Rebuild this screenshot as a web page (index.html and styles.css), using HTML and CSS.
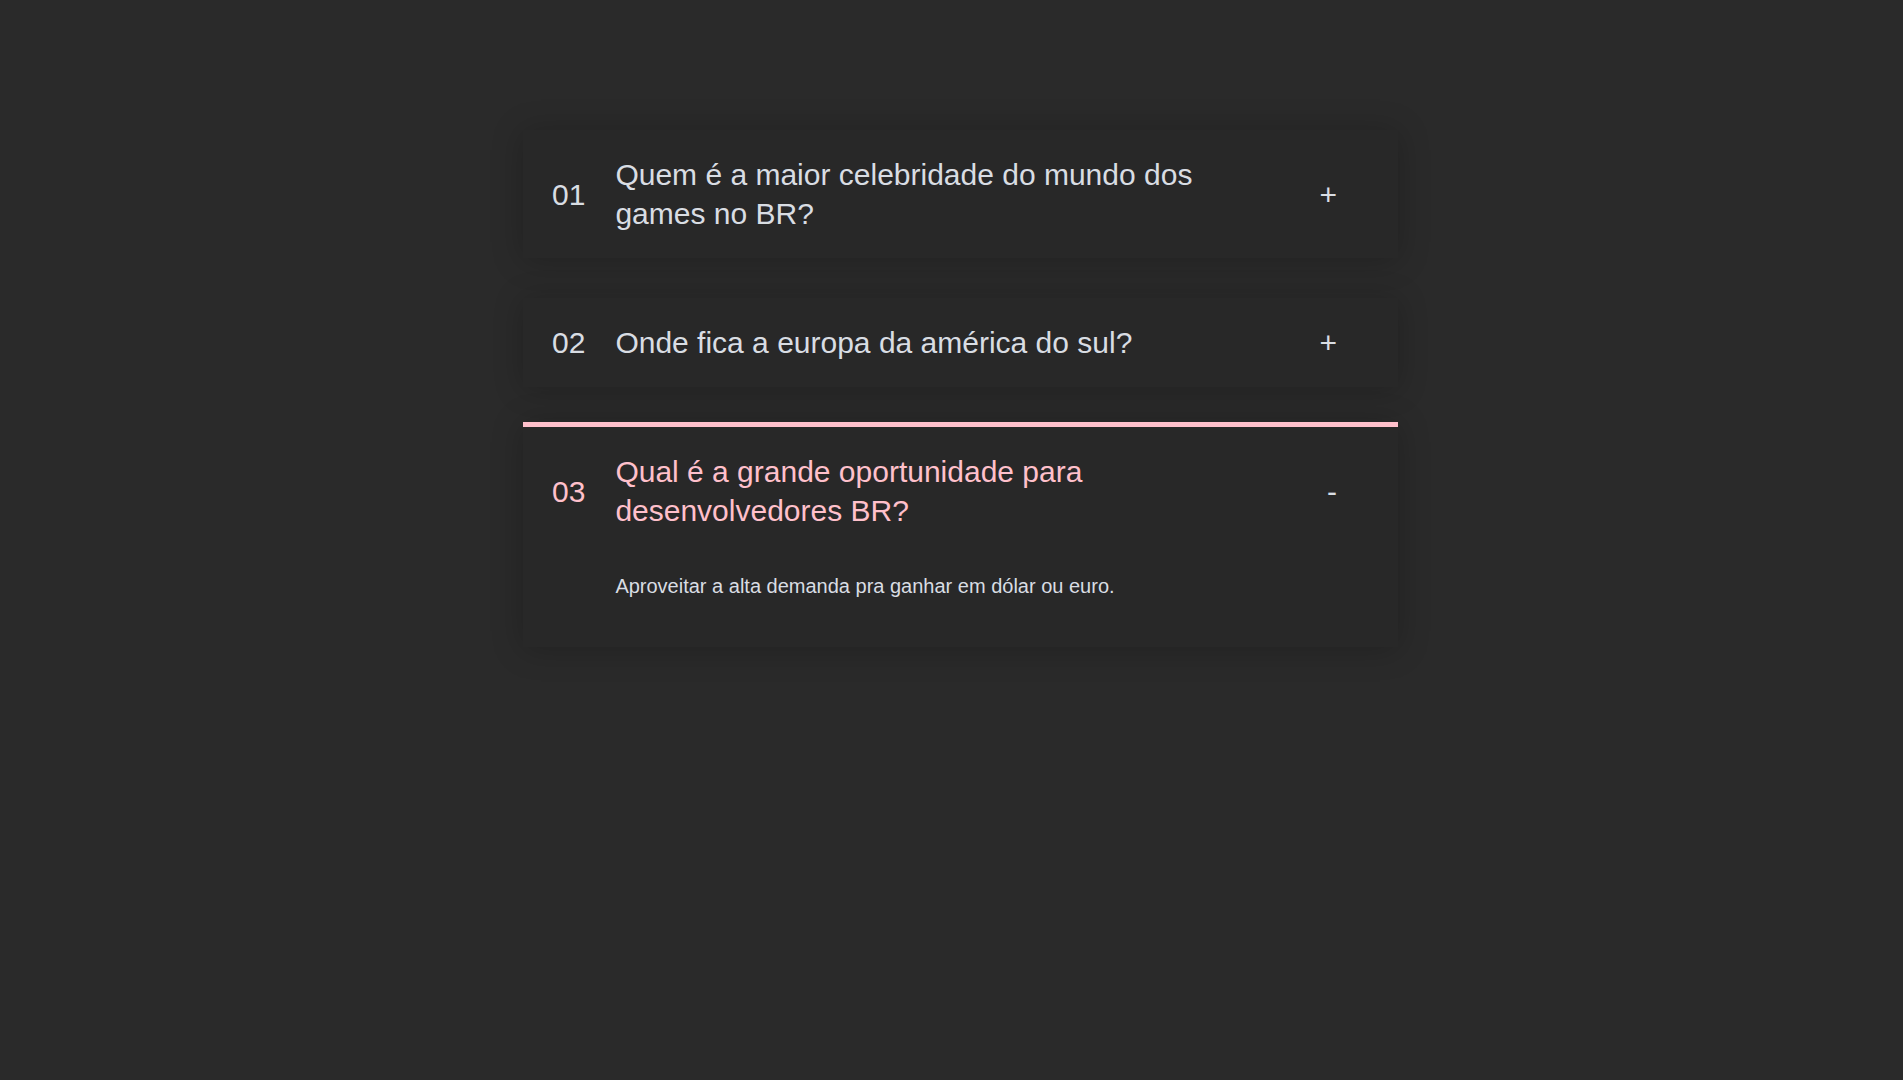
FILE: index.html
```html
<!DOCTYPE html>
<html lang="pt-BR">
<head>
<meta charset="utf-8">
<title>FAQ</title>
<link rel="stylesheet" href="styles.css">
</head>
<body>
<main class="accordion">
  <section class="faq">
    <span class="faq__num">01</span>
    <h2 class="faq__question">Quem é a maior celebridade do mundo dos games no BR?</h2>
    <span class="faq__icon">+</span>
  </section>
  <section class="faq">
    <span class="faq__num">02</span>
    <h2 class="faq__question">Onde fica a europa da américa do sul?</h2>
    <span class="faq__icon">+</span>
  </section>
  <section class="faq faq--open">
    <span class="faq__num">03</span>
    <h2 class="faq__question">Qual é a grande oportunidade para desenvolvedores BR?</h2>
    <span class="faq__icon">-</span>
    <p class="faq__answer">Aproveitar a alta demanda pra ganhar em dólar ou euro.</p>
  </section>
</main>
</body>
</html>
```
FILE: styles.css
```css
* {
  box-sizing: border-box;
}

html, body {
  margin: 0;
  background: #2a2a2a;
}

body {
  min-height: 100vh;
  padding: 130px 0 0 18px;
  font-family: "Liberation Sans", Arial, sans-serif;
  color: #d9dde3;
}

.accordion {
  width: 875px;
  margin: 0 auto;
}

.faq {
  display: grid;
  grid-template-columns: auto 1fr auto;
  column-gap: 30px;
  align-items: center;
  padding: 25px 61px 25px 29px;
  margin-bottom: 40px;
  background: #282828;
  box-shadow: 0 2px 30px rgba(0, 0, 0, 0.22);
}

.faq__num,
.faq__question,
.faq__icon {
  font-size: 30px;
  line-height: 39px;
  font-weight: 400;
}

.faq__question {
  margin: 0;
  padding-right: 48px;
}

.faq__icon {
  text-align: right;
}

.faq--open {
  margin-top: -5px;
  border-top: 5px solid #ffc0cb;
}

.faq--open .faq__num,
.faq--open .faq__question {
  color: #ffc0cb;
}

.faq__answer {
  grid-column: 2 / 4;
  margin: 41px 0 21px;
  font-size: 20px;
  line-height: 30px;
  color: #d9dde3;
}
```
